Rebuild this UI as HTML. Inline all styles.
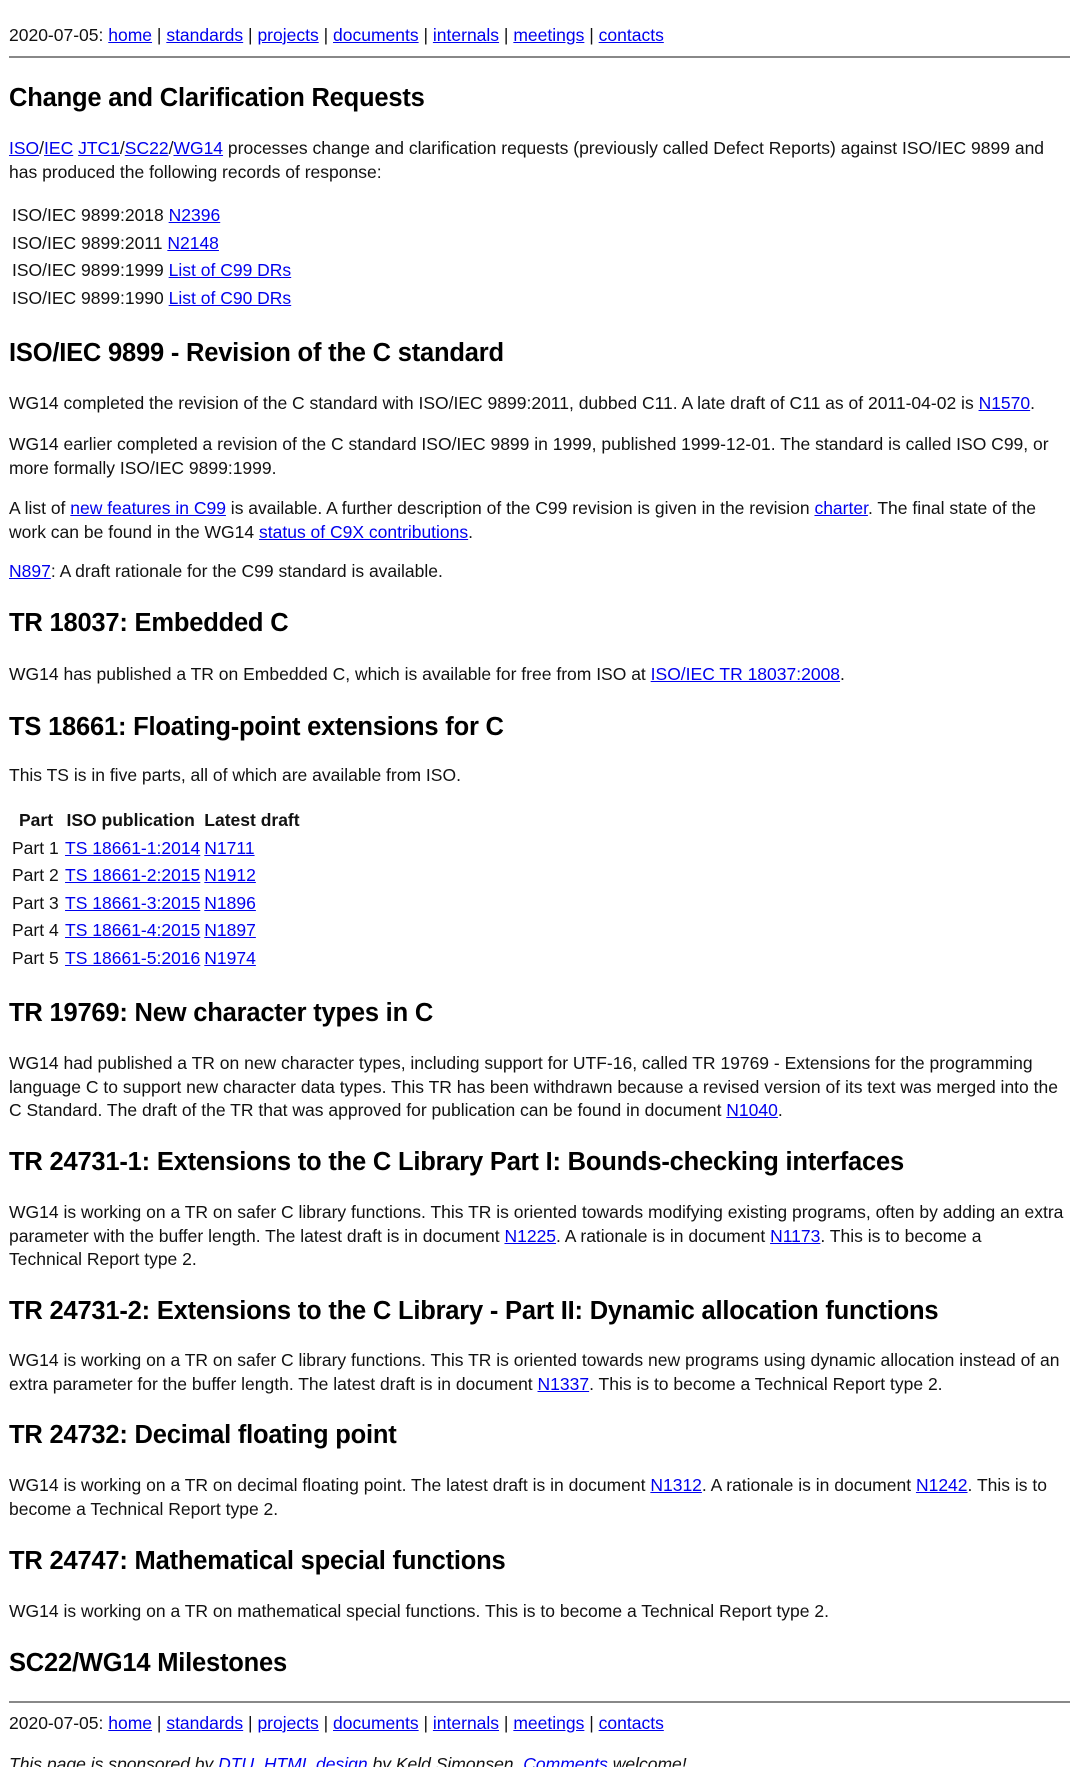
<!DOCTYPE html>
<html><head><meta charset="utf-8"><style>
html,body{margin:0;padding:0;background:#fff;width:1080px;height:1767px;overflow:hidden;position:relative}
body{font-family:"Liberation Sans",sans-serif;font-size:17.5px;color:#111}
a{color:#00e;text-decoration:underline}
.b{position:absolute;left:9px;line-height:23.5px;white-space:nowrap}
.h{position:absolute;left:9px;font-weight:bold;font-size:25.5px;line-height:30px;white-space:nowrap;color:#000;letter-spacing:-0.2px}
.hr{position:absolute;left:9px;width:1061px;height:2px;background:#888}
.t{position:absolute;left:12px;line-height:27.5px;white-space:nowrap}
.t td{padding:0 4px 0 0}
</style></head><body>
<div class="b" style="top:24px">2020-07-05: <a>home</a> | <a>standards</a> | <a>projects</a> | <a>documents</a> | <a>internals</a> | <a>meetings</a> | <a>contacts</a></div>
<div class="hr" style="top:56px"></div>
<div class="h" style="top:83px">Change and Clarification Requests</div>
<div class="b" style="top:137px"><a>ISO</a>/<a>IEC</a> <a>JTC1</a>/<a>SC22</a>/<a>WG14</a> processes change and clarification requests (previously called Defect Reports) against ISO/IEC 9899 and<br>has produced the following records of response:</div>
<div class="t" style="top:202px">ISO/IEC 9899:2018 <a>N2396</a><br>ISO/IEC 9899:2011 <a>N2148</a><br>ISO/IEC 9899:1999 <a>List of C99 DRs</a><br>ISO/IEC 9899:1990 <a>List of C90 DRs</a></div>
<div class="h" style="top:338px">ISO/IEC 9899 - Revision of the C standard</div>
<div class="b" style="top:392px">WG14 completed the revision of the C standard with ISO/IEC 9899:2011, dubbed C11. A late draft of C11 as of 2011-04-02 is <a>N1570</a>.</div>
<div class="b" style="top:433px">WG14 earlier completed a revision of the C standard ISO/IEC 9899 in 1999, published 1999-12-01. The standard is called ISO C99, or<br>more formally ISO/IEC 9899:1999.</div>
<div class="b" style="top:497px">A list of <a>new features in C99</a> is available. A further description of the C99 revision is given in the revision <a>charter</a>. The final state of the<br>work can be found in the WG14 <a>status of C9X contributions</a>.</div>
<div class="b" style="top:560px"><a>N897</a>: A draft rationale for the C99 standard is available.</div>
<div class="h" style="top:608px">TR 18037: Embedded C</div>
<div class="b" style="top:663px">WG14 has published a TR on Embedded C, which is available for free from ISO at <a>ISO/IEC TR 18037:2008</a>.</div>
<div class="h" style="top:712px">TS 18661: Floating-point extensions for C</div>
<div class="b" style="top:764px">This TS is in five parts, all of which are available from ISO.</div>
<div class="t" style="top:807px"><table cellspacing="0" cellpadding="0" style="font-size:17.5px;border-collapse:collapse">
<tr><th style="padding:0 12px 0 7px">Part</th><th style="padding-right:8px">ISO publication</th><th>Latest draft</th></tr>
<tr><td>Part 1</td><td><a>TS 18661-1:2014</a></td><td><a>N1711</a></td></tr>
<tr><td>Part 2</td><td><a>TS 18661-2:2015</a></td><td><a>N1912</a></td></tr>
<tr><td>Part 3</td><td><a>TS 18661-3:2015</a></td><td><a>N1896</a></td></tr>
<tr><td>Part 4</td><td><a>TS 18661-4:2015</a></td><td><a>N1897</a></td></tr>
<tr><td>Part 5</td><td><a>TS 18661-5:2016</a></td><td><a>N1974</a></td></tr>
</table></div>
<div class="h" style="top:998px">TR 19769: New character types in C</div>
<div class="b" style="top:1052px">WG14 had published a TR on new character types, including support for UTF-16, called TR 19769 - Extensions for the programming<br>language C to support new character data types. This TR has been withdrawn because a revised version of its text was merged into the<br>C Standard. The draft of the TR that was approved for publication can be found in document <a>N1040</a>.</div>
<div class="h" style="top:1147px">TR 24731-1: Extensions to the C Library Part I: Bounds-checking interfaces</div>
<div class="b" style="top:1201px">WG14 is working on a TR on safer C library functions. This TR is oriented towards modifying existing programs, often by adding an extra<br>parameter with the buffer length. The latest draft is in document <a>N1225</a>. A rationale is in document <a>N1173</a>. This is to become a<br>Technical Report type 2.</div>
<div class="h" style="top:1296px">TR 24731-2: Extensions to the C Library - Part II: Dynamic allocation functions</div>
<div class="b" style="top:1349px">WG14 is working on a TR on safer C library functions. This TR is oriented towards new programs using dynamic allocation instead of an<br>extra parameter for the buffer length. The latest draft is in document <a>N1337</a>. This is to become a Technical Report type 2.</div>
<div class="h" style="top:1420px">TR 24732: Decimal floating point</div>
<div class="b" style="top:1474px">WG14 is working on a TR on decimal floating point. The latest draft is in document <a>N1312</a>. A rationale is in document <a>N1242</a>. This is to<br>become a Technical Report type 2.</div>
<div class="h" style="top:1546px">TR 24747: Mathematical special functions</div>
<div class="b" style="top:1600px">WG14 is working on a TR on mathematical special functions. This is to become a Technical Report type 2.</div>
<div class="h" style="top:1648px">SC22/WG14 Milestones</div>
<div class="hr" style="top:1701px"></div>
<div class="b" style="top:1712px">2020-07-05: <a>home</a> | <a>standards</a> | <a>projects</a> | <a>documents</a> | <a>internals</a> | <a>meetings</a> | <a>contacts</a></div>
<div class="b" style="top:1753px;font-style:italic">This page is sponsored by <a>DTU</a>. <a>HTML design</a> by Keld Simonsen. <a>Comments</a> welcome!</div>
</body></html>
